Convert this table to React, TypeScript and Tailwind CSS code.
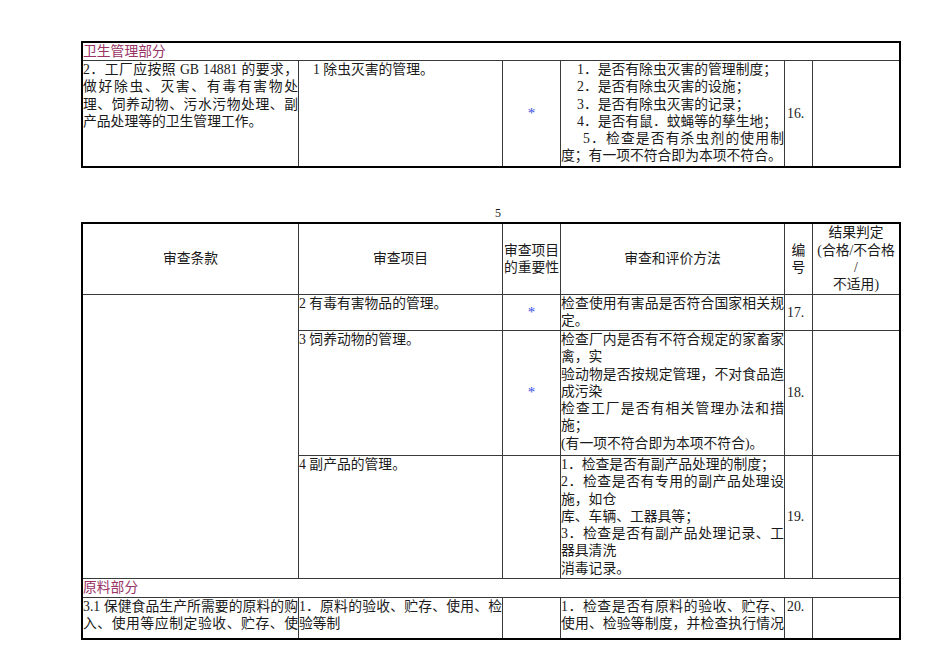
import React from 'react';

const font = "font-['Liberation_Serif','Noto_Sans_CJK_SC',serif]";

function L({ children, j, className = '' }: { children: React.ReactNode; j?: boolean; className?: string }) {
  return (
    <div className={`${j ? 'text-justify [text-align-last:justify]' : ''} whitespace-nowrap ${className}`}>{children}</div>
  );
}

function Cell({ children, className = '' }: { children?: React.ReactNode; className?: string }) {
  return <div className={`bg-white overflow-hidden ${className}`}>{children}</div>;
}

function Star() {
  return <Cell className="flex items-center justify-center text-[#3a4ee0] text-[15px]">*</Cell>;
}

function Num({ n, top }: { n: string; top?: boolean }) {
  return <Cell className={`flex pl-[2px] ${top ? 'items-start' : 'items-center'}`}>{n}</Cell>;
}

const grid = 'grid grid-cols-[215px_203px_57px_223px_27px_86px] gap-px bg-[#3a3a3a] border-2 border-black w-[820px]';

export default function App() {
  return (
    <div className={`min-h-screen bg-white text-[#1a1a1a] ${font} text-[13.8px] leading-[17.3px] pl-[81px] pt-[41px]`}>
      {/* 上一页的末尾 */}
      <div className={`${grid} grid-rows-[17px_105px]`}>
        <Cell className="col-span-6 text-[#993366] leading-[17px]">卫生管理部分</Cell>
        <Cell>
          <L j>2．工厂应按照 GB 14881 的要求，</L>
          <L j>做好除虫、灭害、有毒有害物处</L>
          <L j>理、饲养动物、污水污物处理、副</L>
          <L>产品处理等的卫生管理工作。</L>
        </Cell>
        <Cell className="pl-[14px]">1 除虫灭害的管理。</Cell>
        <Star />
        <Cell>
          <L className="pl-[16px]">1．是否有除虫灭害的管理制度；</L>
          <L className="pl-[16px]">2．是否有除虫灭害的设施；</L>
          <L className="pl-[16px]">3．是否有除虫灭害的记录；</L>
          <L className="pl-[16px]">4．是否有鼠．蚊蝇等的孳生地；</L>
          <L j className="pl-[22px]">5．检查是否有杀虫剂的使用制</L>
          <L>度；有一项不符合即为本项不符合。</L>
        </Cell>
        <Num n="16." />
        <Cell />
      </div>

      <div className="mt-[37px] h-[17px] leading-[17px] text-[12px] pl-[414px]">5</div>

      <div className={`${grid} grid-rows-[70px_35px_124px_122px_18px_40px]`}>
        <Cell className="flex items-center justify-center">审查条款</Cell>
        <Cell className="flex items-center justify-center">审查项目</Cell>
        <Cell className="flex flex-col items-center justify-center">
          <L>审查项目</L>
          <L>的重要性</L>
        </Cell>
        <Cell className="flex items-center justify-center">审查和评价方法</Cell>
        <Cell className="flex flex-col items-center justify-center">
          <L>编</L>
          <L>号</L>
        </Cell>
        <Cell className="flex flex-col items-center justify-center">
          <L>结果判定</L>
          <L>(合格/不合格</L>
          <L>/</L>
          <L>不适用)</L>
        </Cell>

        <Cell className="row-span-3" />
        <Cell>2 有毒有害物品的管理。</Cell>
        <Star />
        <Cell>
          <L j>检查使用有害品是否符合国家相关规</L>
          <L>定。</L>
        </Cell>
        <Num n="17." />
        <Cell />

        <Cell>3 饲养动物的管理。</Cell>
        <Star />
        <Cell>
          <L j>检查厂内是否有不符合规定的家畜家</L>
          <L>禽，实</L>
          <L j>验动物是否按规定管理，不对食品造</L>
          <L>成污染</L>
          <L j>检查工厂是否有相关管理办法和措</L>
          <L>施；</L>
          <L>(有一项不符合即为本项不符合)。</L>
        </Cell>
        <Num n="18." />
        <Cell />

        <Cell>4 副产品的管理。</Cell>
        <Cell />
        <Cell>
          <L>1．检查是否有副产品处理的制度；</L>
          <L j>2．检查是否有专用的副产品处理设</L>
          <L>施，如仓</L>
          <L>库、车辆、工器具等；</L>
          <L j>3．检查是否有副产品处理记录、工</L>
          <L>器具清洗</L>
          <L>消毒记录。</L>
        </Cell>
        <Num n="19." />
        <Cell />

        <Cell className="col-span-6 text-[#993366] leading-[18px]">原料部分</Cell>

        <Cell>
          <L j>3.1 保健食品生产所需要的原料的购</L>
          <L j>入、使用等应制定验收、贮存、使</L>
        </Cell>
        <Cell>
          <L j>1．原料的验收、贮存、使用、检</L>
          <L>验等制</L>
        </Cell>
        <Cell />
        <Cell>
          <L j>1．检查是否有原料的验收、贮存、</L>
          <L j>使用、检验等制度，并检查执行情况</L>
        </Cell>
        <Num n="20." top />
        <Cell />
      </div>
    </div>
  );
}
